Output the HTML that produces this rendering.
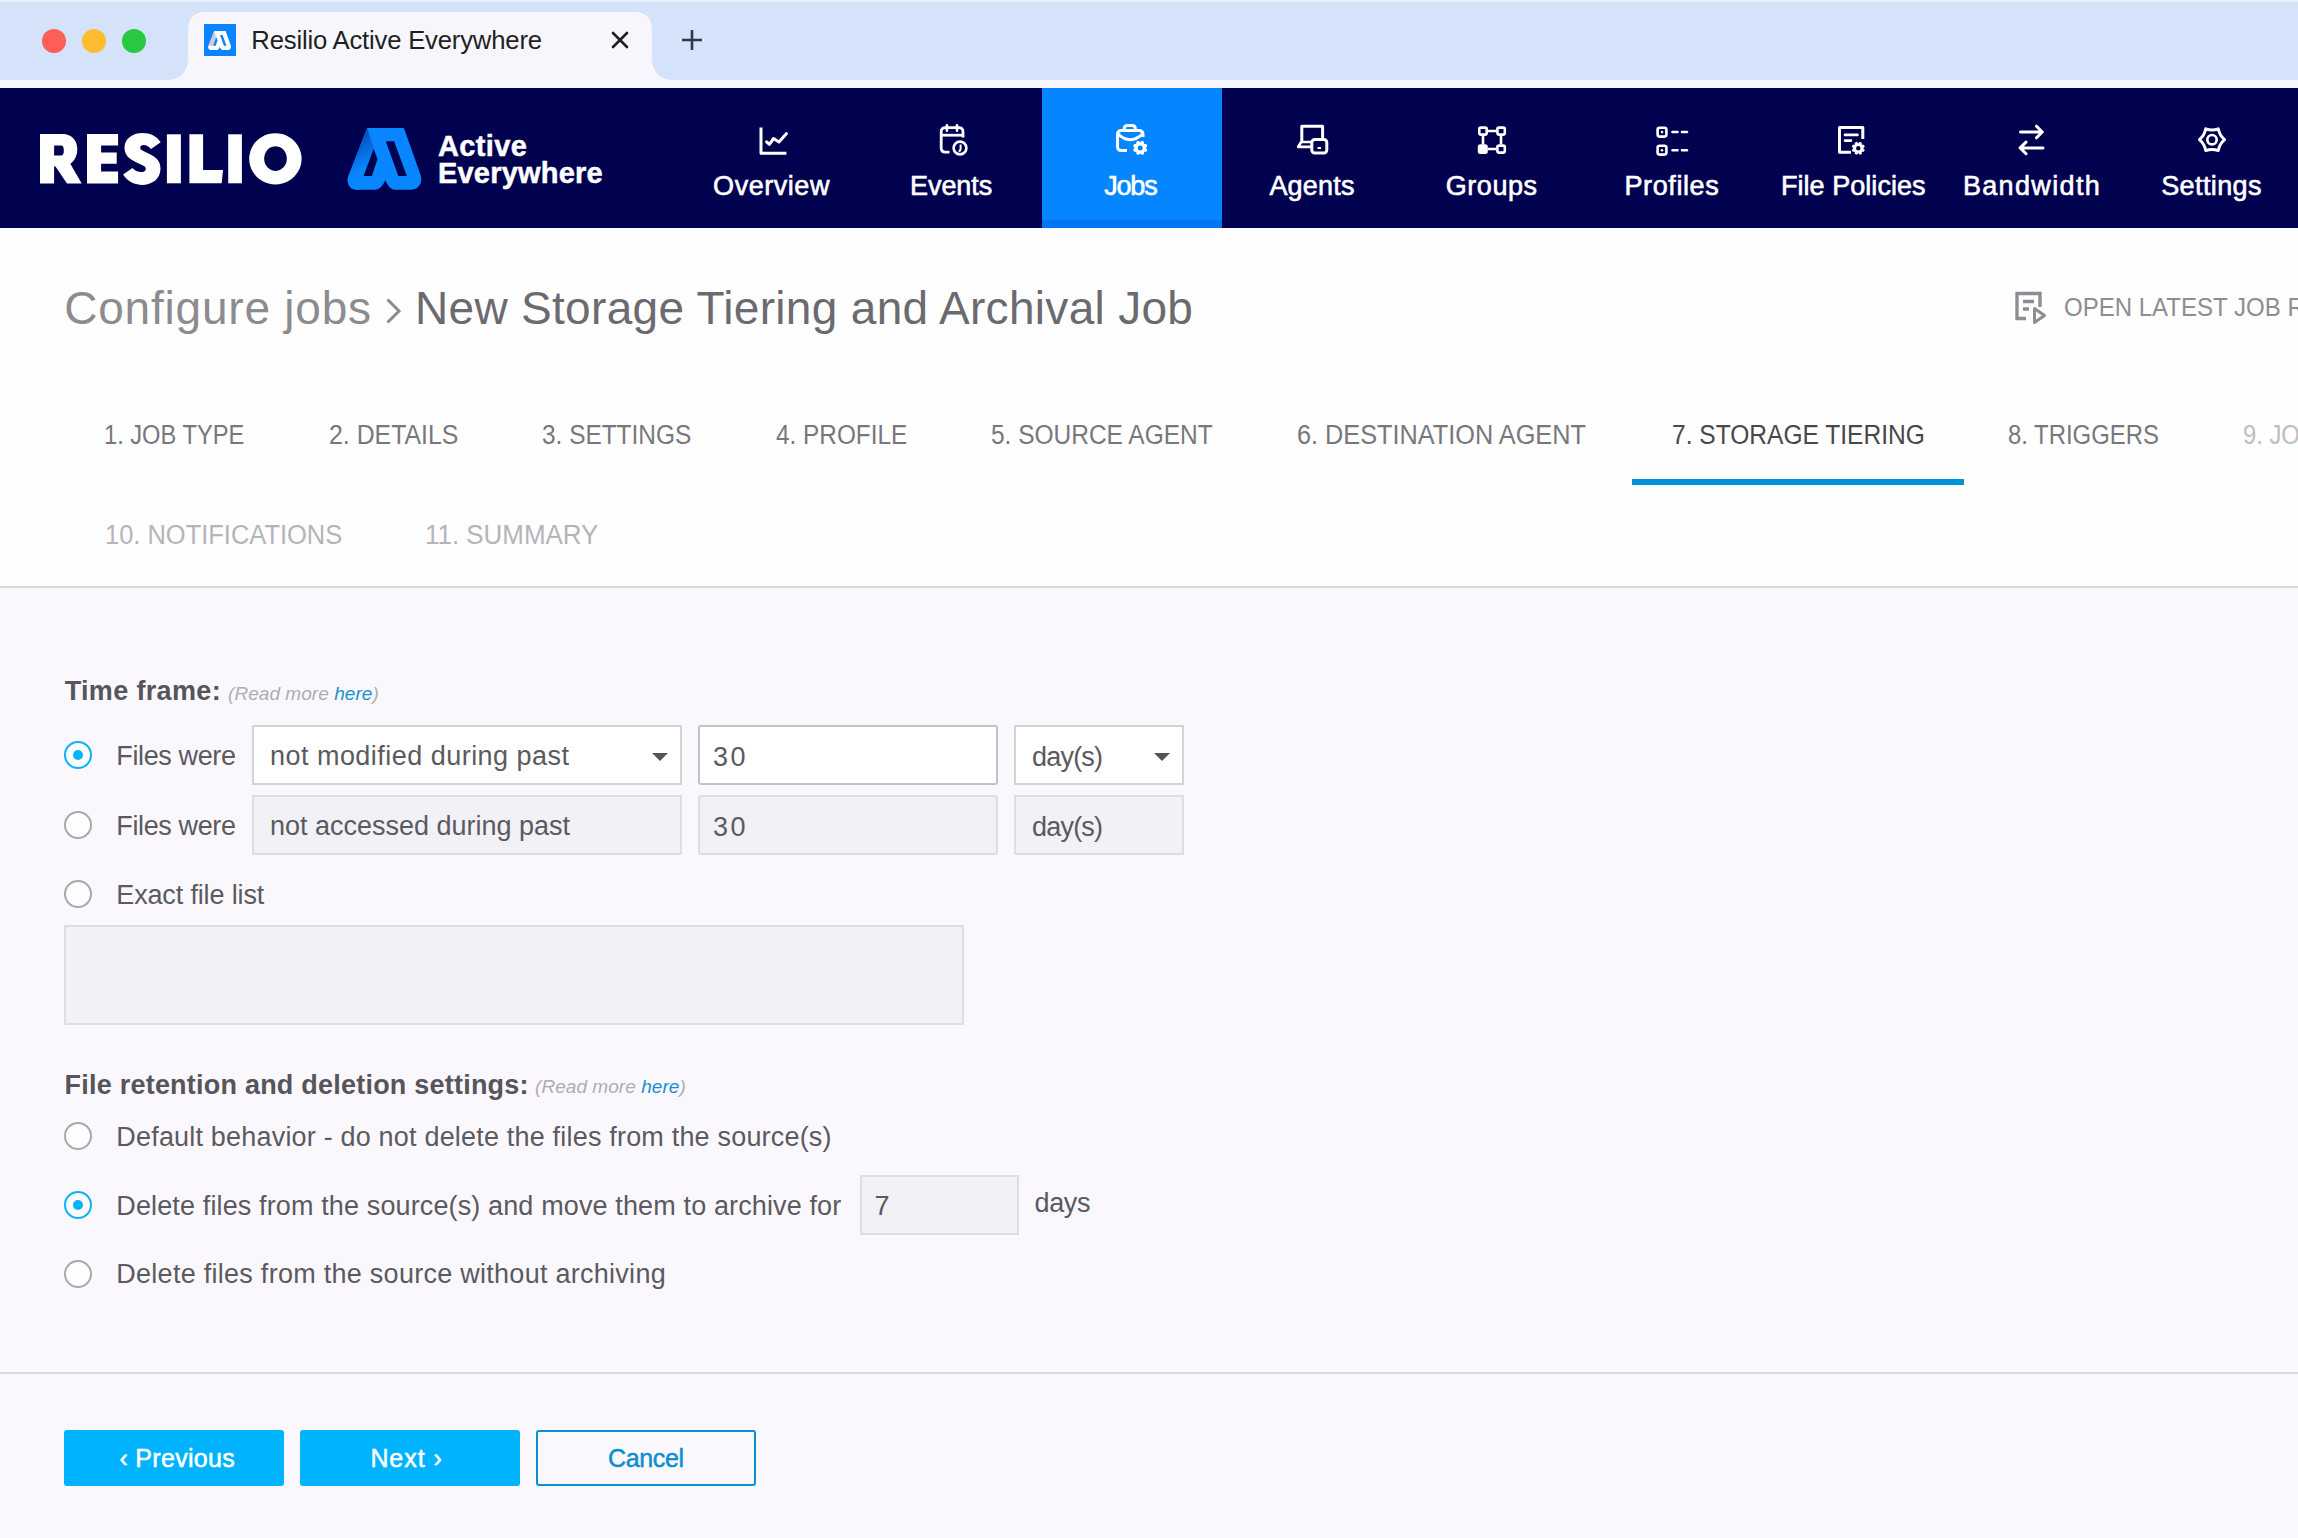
<!DOCTYPE html>
<html><head><meta charset="utf-8">
<style>
*{box-sizing:border-box;margin:0;padding:0}
html,body{width:2298px;height:1538px;overflow:hidden;background:#faf8fd;font-family:"Liberation Sans",sans-serif}
.a{position:absolute}
.t{position:absolute;white-space:pre;line-height:1}
#chrome{left:0;top:0;width:2298px;height:88px;background:#f7f6fd}
#tabbar{left:0;top:0;width:2298px;height:80px;background:#d4e3f9}
#nav{left:0;top:88px;width:2298px;height:140px;background:#01024f}
#header{left:0;top:228px;width:2298px;height:358px;background:#fefefe}
#hline{left:0;top:586px;width:2298px;height:2px;background:#dbd9dd}
#fline{left:0;top:1372px;width:2298px;height:2px;background:#d9d8dd}
.navlbl{color:#fff;font-size:26px;font-weight:700;text-align:center;width:180px}
.navic{width:40px;height:40px}
.tab{font-size:26px;color:#6e6d72}
.lbl{font-size:26px;color:#58575d}
.radio{width:28px;height:28px;border-radius:50%;border:2px solid #a9a8ad;background:#fdfdfe}
.radio.on{border:2.5px solid #0ab2f8}
.radio.on::after{content:"";position:absolute;left:6.5px;top:6.5px;width:10px;height:10px;border-radius:50%;background:#0ab2f8}
.inp{border:2px solid #d3d2d7;background:#fff}
.inp.dis{background:#f2f1f6;border-color:#dedde2}
.caret{width:0;height:0;border-left:8px solid transparent;border-right:8px solid transparent;border-top:8px solid #55545a}
.btn{height:56px;width:220px;background:#00b3fe;border-radius:3px;color:#fff;font-size:25px;font-weight:700;text-align:center}
</style></head><body>
<!-- browser chrome -->
<div id="chrome" class="a"></div>
<div id="tabbar" class="a"></div>
<div class="a" style="left:0;top:0;width:2298px;height:2px;background:#eaf0fb"></div>
<svg class="a" style="left:0;top:0" width="720" height="88">
  <circle cx="54" cy="41" r="12" fill="#fe5f57"/>
  <circle cx="94" cy="41" r="12" fill="#febc2e"/>
  <circle cx="134" cy="41" r="12" fill="#28c840"/>
    <path d="M166,80 C180,80 188,72 188,58 L188,30 C188,18 194,12 206,12 L634,12 C646,12 652,18 652,30 L652,58 C652,72 660,80 674,80 Z" fill="#f7f6fd"/>
  <rect x="204" y="24" width="32" height="32" fill="#0a84ff"/>
  <g transform="translate(100.4,-8.8) scale(0.31)">
  <path d="M367.1,128 L403.9,128 L420.6,175 C423,182 419,189.7 411,189.7 L395,189.7 C391,189.7 388,186 385.3,180.2 C382.5,186 379.5,189.7 375,189.7 L357,189.7 C349,189.7 346,182 348.5,176 Z" fill="#fff"/>
  <path d="M367.1,128 L377.5,159 L363.6,176.1 L348.5,176 Z" fill="#b9b6d0" opacity="0.7"/>
  <path d="M385.8,141.2 L394.1,141.2 L406.8,176.1 L398.3,176.1 Z" fill="#0a84ff"/>
  <path d="M373.6,148.8 L377.5,159 L371.9,176.1 L363.6,176.1 Z" fill="#0a84ff"/>
  </g>
  <path d="M613,33 L627,47 M627,33 L613,47" stroke="#1f1f1f" stroke-width="2.6" stroke-linecap="round"/>
  <path d="M692,30 L692,50 M682,40 L702,40" stroke="#2f3a4a" stroke-width="2.6"/>
</svg>
<div class="t" style="left:251.3px;top:27.5px;font-size:25.7px;color:#1f1f1f;letter-spacing:-0.2px">Resilio Active Everywhere</div>

<!-- navbar -->
<div id="nav" class="a"></div>
<div class="a" style="left:1042px;top:88px;width:180px;height:140px;background:#0586ff"></div>
<div class="a" style="left:1042px;top:220px;width:180px;height:8px;background:#0076f4"></div>

<svg class="a" style="left:0;top:88px" width="680" height="140" viewBox="0 88 680 140">
  <g fill="#fff">
    <path fill-rule="evenodd" d="M40,134.1 L63,134.1 C71.5,134.1 77.3,140.5 77.3,149.2 C77.3,156 74,161.5 70.3,163.8 L81.7,183.5 L67,183.5 L55.5,166.4 L54.1,166.4 L54.1,183.5 L40,183.5 Z M54.1,145.6 L61.5,145.6 C63.2,145.6 63.8,147.8 63.8,150.6 C63.8,153.4 63.2,155.6 61.5,155.6 L54.1,155.6 Z"/>
    <path d="M87,134.1 H118.1 V145.6 H101.1 V152.6 H116.7 V163.8 H101.1 V171.4 H118.1 V183.5 H87 Z"/>
    <path d="M160.7,142.3 C157,136 150,132.9 142.5,132.9 C132,132.9 124.5,139 124.5,147.8 C124.5,155 129,158.8 136,162.2 L142.5,165.3 C144.8,166.4 145.8,167.3 145.8,168.7 C145.8,170.8 143.8,172.1 141.3,172.1 C137.8,172.1 134.6,170.2 132.5,167.9 L123.1,174.6 C127,181 134,184.9 141.3,184.9 C153,184.9 160.5,178.2 160.5,168.4 C160.5,160.5 155.5,156.8 149,153.7 L142.8,150.7 C141,149.8 140.2,148.9 140.2,147.6 C140.2,146 141.6,145 143.6,145 C146.6,145 149.4,146.8 151,149.1 Z"/>
    <rect x="166.9" y="134.3" width="14" height="49"/>
    <path d="M189.4,134.3 H203.1 V170 H223 L221.7,183.3 H189.4 Z"/>
    <rect x="228.2" y="134.3" width="13.7" height="49"/>
    <path fill-rule="evenodd" d="M275.4,133.2 A26.2,25.6 0 1 1 275.39,133.2 Z M275.5,146.2 A11.4,12.4 0 1 0 275.51,146.2 Z"/>
  </g>
  <defs>
    <linearGradient id="lg1" x1="0" y1="0" x2="0.3" y2="1">
      <stop offset="0" stop-color="#003c9e"/>
      <stop offset="0.75" stop-color="#0886ff"/>
    </linearGradient>
  </defs>
  <path d="M367.1,128 L403.9,128 L420.6,175 C423,182 419,189.7 411,189.7 L395,189.7 C391,189.7 388,186 385.3,180.2 C382.5,186 379.5,189.7 375,189.7 L357,189.7 C349,189.7 346,182 348.5,176 Z" fill="#0886ff"/>
  <path d="M367.1,128 L377.5,159 L363.6,176.1 L371.9,176.1 L362,189 L357,189.7 C349,189.7 346,182 348.5,176 Z" fill="url(#lg1)"/>
  <path d="M385.8,141.2 L394.1,141.2 L406.8,176.1 L398.3,176.1 Z" fill="#01024f"/>
  <path d="M373.6,148.8 L377.5,159 L371.9,176.1 L363.6,176.1 Z" fill="#01024f"/>
</svg>
<div class="t" style="left:438px;top:131.7px;font-size:29px;font-weight:700;color:#fff;letter-spacing:0.35px;-webkit-text-stroke:0.5px #fff">Active</div>
<div class="t" style="left:438px;top:158.5px;font-size:29px;font-weight:700;color:#fff;letter-spacing:0.2px;-webkit-text-stroke:0.5px #fff">Everywhere</div>

<svg class="a" style="left:680px;top:88px" width="1618" height="140" viewBox="680 88 1618 140">
 <g fill="none" stroke="#fff" stroke-width="3" stroke-linecap="butt" stroke-linejoin="round">
  <path d="M761,127.5 V153.3 H786.4"/>
  <path d="M766.6,141.8 L769.4,144.3 L773.6,138.5 L779,142 L786.5,133.5" stroke-linecap="round"/>
  <path d="M949.5,152.2 H945.5 Q941.2,152.2 941.2,148 V131.8 Q941.2,127.6 945.5,127.6 H958.8 Q963,127.6 963,131.8 V137.5" stroke-width="2.8"/>
  <path d="M941.2,135.2 H963" stroke-width="2.8"/>
  <path d="M946.9,125.2 V130.8 M957,125.2 V130.8" stroke-linecap="round" stroke-width="2.6"/>
  <circle cx="960" cy="148" r="6.4" stroke-width="2.6"/>
  <path d="M960.6,144.6 V148.8 Q960.6,151 958.6,151.3" stroke-width="2"/>
  <path d="M1127,150.4 H1121.5 Q1117.5,150.4 1117.5,146.4 V134.6 Q1117.5,130.6 1121.5,130.6 H1139 Q1143,130.6 1143,134.6 V137"/>
  <path d="M1117.5,133.5 Q1130,146 1143,133.5"/>
  <path d="M1124.3,130.6 V128.5 Q1124.3,125.5 1127.3,125.5 H1132.3 Q1135.3,125.5 1135.3,128.5 V130.6"/>
  <path d="M1301.8,141 V126.3 H1322.6 V139"/>
  <path d="M1311,142 H1301.2 L1298.2,146.8 H1311" stroke-width="2.7" stroke-linejoin="round"/>
  <rect x="1311.8" y="139.5" width="15" height="13.5" rx="3"/>
  <path d="M1317.5,148 H1321" stroke-width="2"/>
  <g stroke-width="2.6">
   <rect x="1479.3" y="127.6" width="7.4" height="7" rx="1.5"/>
   <rect x="1497.4" y="127.6" width="7.4" height="7" rx="1.5"/>
   <rect x="1497.4" y="145.6" width="7.4" height="7" rx="1.5"/>
   <path d="M1487.7,131 H1496.2 M1487.7,149 H1496.2 M1483,135.5 V144.5 M1501,135.5 V144.5"/>
   <rect x="1657.6" y="127.7" width="8.8" height="8.9" rx="2"/>
   <rect x="1657.6" y="145.8" width="8.8" height="8.8" rx="2"/>
   <path d="M1672.5,132 H1677.5 M1682,132 H1687 M1672.5,150.2 H1677.5 M1682,150.2 H1687" stroke-linecap="round"/>
  </g>
  <path d="M1851,152.2 H1839.5 V127.5 H1862.8 V139"/>
  <path d="M1845,134.9 H1857.5 M1845,140.6 H1851" stroke-width="2.6" stroke-linecap="round"/>
  <path d="M2020.5,132 H2042 M2036.5,126.2 L2042.3,132 L2036.5,137.8" stroke-linecap="round"/>
  <path d="M2043,147.9 H2021 M2026,142.1 L2020.2,147.9 L2026,153.7" stroke-linecap="round"/>
  <circle cx="2212" cy="139.7" r="4.7" stroke-width="2.7"/>
 </g>
 <g fill="#fff">
  <rect x="1477.8" y="144.3" width="10" height="9.6" rx="2.5"/>
  <circle cx="1662" cy="132.1" r="1.3"/>
  <circle cx="1662" cy="150.2" r="1.3"/>
  <path fill-rule="evenodd" d="M1145.80,147.99 L1147.32,149.53 L1146.40,151.75 L1144.25,151.77 L1144.09,151.93 L1144.08,154.08 L1141.87,155.01 L1140.33,153.50 L1140.11,153.50 L1138.57,155.02 L1136.35,154.10 L1136.33,151.95 L1136.17,151.79 L1134.02,151.78 L1133.09,149.57 L1134.60,148.03 L1134.60,147.81 L1133.08,146.27 L1134.00,144.05 L1136.15,144.03 L1136.31,143.87 L1136.32,141.72 L1138.53,140.79 L1140.07,142.30 L1140.29,142.30 L1141.83,140.78 L1144.05,141.70 L1144.07,143.85 L1144.23,144.01 L1146.38,144.02 L1147.31,146.23 L1145.80,147.77 Z M1142.70,147.90 A2.5,2.5 0 1 0 1137.70,147.90 A2.5,2.5 0 1 0 1142.70,147.90 Z"/>
  <path fill-rule="evenodd" d="M1863.30,148.38 L1864.73,149.77 L1863.91,151.78 L1861.91,151.76 L1861.78,151.89 L1861.81,153.89 L1859.81,154.73 L1858.41,153.30 L1858.22,153.30 L1856.83,154.73 L1854.82,153.91 L1854.84,151.91 L1854.71,151.78 L1852.71,151.81 L1851.87,149.81 L1853.30,148.41 L1853.30,148.22 L1851.87,146.83 L1852.69,144.82 L1854.69,144.84 L1854.82,144.71 L1854.79,142.71 L1856.79,141.87 L1858.19,143.30 L1858.38,143.30 L1859.77,141.87 L1861.78,142.69 L1861.76,144.69 L1861.89,144.82 L1863.89,144.79 L1864.73,146.79 L1863.30,148.19 Z M1860.50,148.30 A2.2,2.2 0 1 0 1856.10,148.30 A2.2,2.2 0 1 0 1860.50,148.30 Z"/>
 </g>
 <path d="M2224.60,139.70 Q2219.45,144.00 2218.30,150.61 Q2212.00,148.30 2205.70,150.61 Q2204.55,144.00 2199.40,139.70 Q2204.55,135.40 2205.70,128.79 Q2212.00,131.10 2218.30,128.79 Q2219.45,135.40 2224.60,139.70Z" fill="none" stroke="#fff" stroke-width="2.9" stroke-linejoin="round"/>
</svg>

<!-- header -->
<div id="header" class="a"></div>
<div id="hline" class="a"></div>
<svg class="a" style="left:380px;top:290px" width="30" height="40" viewBox="380 290 30 40">
  <path d="M387.5,299.5 L399,311 L387.5,322.5" fill="none" stroke="#8c8b90" stroke-width="3"/>
</svg>
<svg class="a" style="left:2010px;top:288px" width="40" height="40" viewBox="2010 288 40 40">
  <g fill="none" stroke="#8e8d92" stroke-width="3.4">
    <path d="M2026,318.5 H2017 V293.5 H2040 V307"/>
    <path d="M2023,301.5 H2034 M2023,309 H2029"/>
    <path d="M2034.5,308.5 V322.5 L2044.5,315.5 Z" stroke-linejoin="round" stroke-width="3"/>
  </g>
</svg>
<div class="a" style="left:1632px;top:479px;width:332px;height:6px;background:#0092d9"></div>
<div class="t" style="left:2243px;top:421.5px;font-size:27px;color:#bdbcc1;transform:scaleX(0.88);transform-origin:0 0">9. JOB</div>

<!-- content -->
<div class="a radio on" style="left:64px;top:741px"></div>
<div class="a radio" style="left:64px;top:811px"></div>
<div class="a radio" style="left:64px;top:880px"></div>
<div class="a inp" style="left:252px;top:725px;width:430px;height:60px"></div>
<div class="a caret" style="left:652px;top:753px"></div>
<div class="a inp" style="left:698px;top:725px;width:300px;height:60px;border-color:#c4c3c8;border-radius:3px"></div>
<div class="a inp" style="left:1014px;top:725px;width:170px;height:60px"></div>
<div class="a caret" style="left:1154px;top:753px"></div>
<div class="a inp dis" style="left:252px;top:795px;width:430px;height:60px"></div>
<div class="a inp dis" style="left:698px;top:795px;width:300px;height:60px;border-radius:3px"></div>
<div class="a inp dis" style="left:1014px;top:795px;width:170px;height:60px"></div>
<div class="a inp dis" style="left:64px;top:925px;width:900px;height:100px"></div>

<div class="a radio" style="left:64px;top:1122px"></div>
<div class="a radio on" style="left:64px;top:1191px"></div>
<div class="a radio" style="left:64px;top:1260px"></div>
<div class="a inp dis" style="left:860px;top:1175px;width:159px;height:60px"></div>

<div id="fline" class="a"></div>
<div class="a btn" style="left:64px;top:1430px"></div>
<div class="a btn" style="left:300px;top:1430px"></div>
<div class="a btn" style="left:536px;top:1430px;background:transparent;border:2px solid #0b8fd0"></div>
<div class="t" style="left:228px;top:684px;font-size:19px;font-style:italic;color:#aeadb2;letter-spacing:0.05px">(Read more <span style="color:#1b8fd2">here</span>)</div>
<div class="t" style="left:535px;top:1077px;font-size:19px;font-style:italic;color:#aeadb2;letter-spacing:0.05px">(Read more <span style="color:#1b8fd2">here</span>)</div>
<!--TEXTS-->
<div class="t" style="left:713.1px;top:172.8px;font-size:27px;font-weight:400;font-style:normal;color:#fff;letter-spacing:0.54px;-webkit-text-stroke:0.6px #fff">Overview</div>
<div class="t" style="left:910.0px;top:172.8px;font-size:27px;font-weight:400;font-style:normal;color:#fff;letter-spacing:-0.05px;-webkit-text-stroke:0.6px #fff">Events</div>
<div class="t" style="left:1104.2px;top:172.8px;font-size:27px;font-weight:400;font-style:normal;color:#fff;letter-spacing:-1.18px;-webkit-text-stroke:0.6px #fff">Jobs</div>
<div class="t" style="left:1269.4px;top:172.8px;font-size:27px;font-weight:400;font-style:normal;color:#fff;letter-spacing:0.21px;-webkit-text-stroke:0.6px #fff">Agents</div>
<div class="t" style="left:1445.8px;top:172.8px;font-size:27px;font-weight:400;font-style:normal;color:#fff;letter-spacing:0.53px;-webkit-text-stroke:0.6px #fff">Groups</div>
<div class="t" style="left:1624.5px;top:172.8px;font-size:27px;font-weight:400;font-style:normal;color:#fff;letter-spacing:0.60px;-webkit-text-stroke:0.6px #fff">Profiles</div>
<div class="t" style="left:1781.0px;top:172.8px;font-size:27px;font-weight:400;font-style:normal;color:#fff;letter-spacing:0.04px;-webkit-text-stroke:0.6px #fff">File Policies</div>
<div class="t" style="left:1962.9px;top:172.8px;font-size:27px;font-weight:400;font-style:normal;color:#fff;letter-spacing:1.35px;-webkit-text-stroke:0.6px #fff">Bandwidth</div>
<div class="t" style="left:2161.2px;top:172.8px;font-size:27px;font-weight:400;font-style:normal;color:#fff;letter-spacing:0.39px;-webkit-text-stroke:0.6px #fff">Settings</div>
<div class="t" style="left:64.2px;top:285.3px;font-size:46px;font-weight:400;font-style:normal;color:#8c8b90;letter-spacing:0.79px;">Configure jobs</div>
<div class="t" style="left:415.0px;top:285.1px;font-size:46px;font-weight:400;font-style:normal;color:#6b6a70;letter-spacing:0.31px;">New Storage Tiering and Archival Job</div>
<div class="t" style="left:2064.1px;top:294.3px;font-size:26px;font-weight:400;font-style:normal;color:#8e8d92;transform:scaleX(0.9240);transform-origin:0 0;">OPEN LATEST JOB R</div>
<div class="t" style="left:104.2px;top:421.8px;font-size:27px;font-weight:400;font-style:normal;color:#78777c;transform:scaleX(0.8760);transform-origin:0 0;">1. JOB TYPE</div>
<div class="t" style="left:329.3px;top:421.8px;font-size:27px;font-weight:400;font-style:normal;color:#78777c;transform:scaleX(0.9203);transform-origin:0 0;">2. DETAILS</div>
<div class="t" style="left:541.7px;top:421.8px;font-size:27px;font-weight:400;font-style:normal;color:#78777c;transform:scaleX(0.9042);transform-origin:0 0;">3. SETTINGS</div>
<div class="t" style="left:775.7px;top:421.8px;font-size:27px;font-weight:400;font-style:normal;color:#78777c;transform:scaleX(0.9015);transform-origin:0 0;">4. PROFILE</div>
<div class="t" style="left:991.1px;top:421.8px;font-size:27px;font-weight:400;font-style:normal;color:#78777c;transform:scaleX(0.9061);transform-origin:0 0;">5. SOURCE AGENT</div>
<div class="t" style="left:1297.3px;top:421.8px;font-size:27px;font-weight:400;font-style:normal;color:#78777c;transform:scaleX(0.9363);transform-origin:0 0;">6. DESTINATION AGENT</div>
<div class="t" style="left:1672.1px;top:421.8px;font-size:27px;font-weight:400;font-style:normal;color:#48474d;transform:scaleX(0.9091);transform-origin:0 0;">7. STORAGE TIERING</div>
<div class="t" style="left:2007.9px;top:421.8px;font-size:27px;font-weight:400;font-style:normal;color:#78777c;transform:scaleX(0.8845);transform-origin:0 0;">8. TRIGGERS</div>
<div class="t" style="left:104.6px;top:522.3px;font-size:27px;font-weight:400;font-style:normal;color:#b5b4b9;transform:scaleX(0.9432);transform-origin:0 0;">10. NOTIFICATIONS</div>
<div class="t" style="left:425.1px;top:522.3px;font-size:27px;font-weight:400;font-style:normal;color:#b5b4b9;transform:scaleX(0.9600);transform-origin:0 0;">11. SUMMARY</div>
<div class="t" style="left:64.7px;top:677.8px;font-size:27px;font-weight:700;font-style:normal;color:#56555b;letter-spacing:0.34px;">Time frame:</div>
<div class="t" style="left:116.3px;top:743.0px;font-size:27px;font-weight:400;font-style:normal;color:#5b5a60;letter-spacing:-0.37px;">Files were</div>
<div class="t" style="left:270.0px;top:742.8px;font-size:27px;font-weight:400;font-style:normal;color:#5b5a60;letter-spacing:0.47px;">not modified during past</div>
<div class="t" style="left:713.0px;top:743.8px;font-size:27px;font-weight:400;font-style:normal;color:#5b5a60;letter-spacing:2.48px;">30</div>
<div class="t" style="left:1032.0px;top:743.8px;font-size:27px;font-weight:400;font-style:normal;color:#5b5a60;letter-spacing:-0.80px;">day(s)</div>
<div class="t" style="left:116.3px;top:813.2px;font-size:27px;font-weight:400;font-style:normal;color:#5b5a60;letter-spacing:-0.37px;">Files were</div>
<div class="t" style="left:270.0px;top:813.2px;font-size:27px;font-weight:400;font-style:normal;color:#5b5a60;letter-spacing:-0.01px;">not accessed during past</div>
<div class="t" style="left:713.0px;top:813.8px;font-size:27px;font-weight:400;font-style:normal;color:#5b5a60;letter-spacing:2.48px;">30</div>
<div class="t" style="left:1032.0px;top:813.8px;font-size:27px;font-weight:400;font-style:normal;color:#5b5a60;letter-spacing:-0.80px;">day(s)</div>
<div class="t" style="left:116.3px;top:882.2px;font-size:27px;font-weight:400;font-style:normal;color:#5b5a60;letter-spacing:-0.15px;">Exact file list</div>
<div class="t" style="left:64.6px;top:1071.8px;font-size:27px;font-weight:700;font-style:normal;color:#56555b;letter-spacing:0.22px;">File retention and deletion settings:</div>
<div class="t" style="left:116.3px;top:1123.6px;font-size:27px;font-weight:400;font-style:normal;color:#5b5a60;letter-spacing:0.19px;">Default behavior - do not delete the files from the source(s)</div>
<div class="t" style="left:116.3px;top:1192.8px;font-size:27px;font-weight:400;font-style:normal;color:#5b5a60;letter-spacing:0.13px;">Delete files from the source(s) and move them to archive for</div>
<div class="t" style="left:874.6px;top:1193.2px;font-size:27px;font-weight:400;font-style:normal;color:#5b5a60;letter-spacing:0.00px;">7</div>
<div class="t" style="left:1034.6px;top:1189.8px;font-size:27px;font-weight:400;font-style:normal;color:#5b5a60;letter-spacing:-0.38px;">days</div>
<div class="t" style="left:116.3px;top:1261.4px;font-size:27px;font-weight:400;font-style:normal;color:#5b5a60;letter-spacing:0.27px;">Delete files from the source without archiving</div>
<div class="t" style="left:119.5px;top:1446.3px;font-size:25px;font-weight:400;font-style:normal;color:#fff;letter-spacing:0.30px;-webkit-text-stroke:0.5px #fff">‹ Previous</div>
<div class="t" style="left:370.4px;top:1446.3px;font-size:25px;font-weight:400;font-style:normal;color:#fff;letter-spacing:0.93px;-webkit-text-stroke:0.5px #fff">Next ›</div>
<div class="t" style="left:607.9px;top:1446.3px;font-size:25px;font-weight:400;font-style:normal;color:#0b8fd0;letter-spacing:-0.31px;-webkit-text-stroke:0.5px #0b8fd0">Cancel</div>
<!--/TEXTS-->
</body></html>
